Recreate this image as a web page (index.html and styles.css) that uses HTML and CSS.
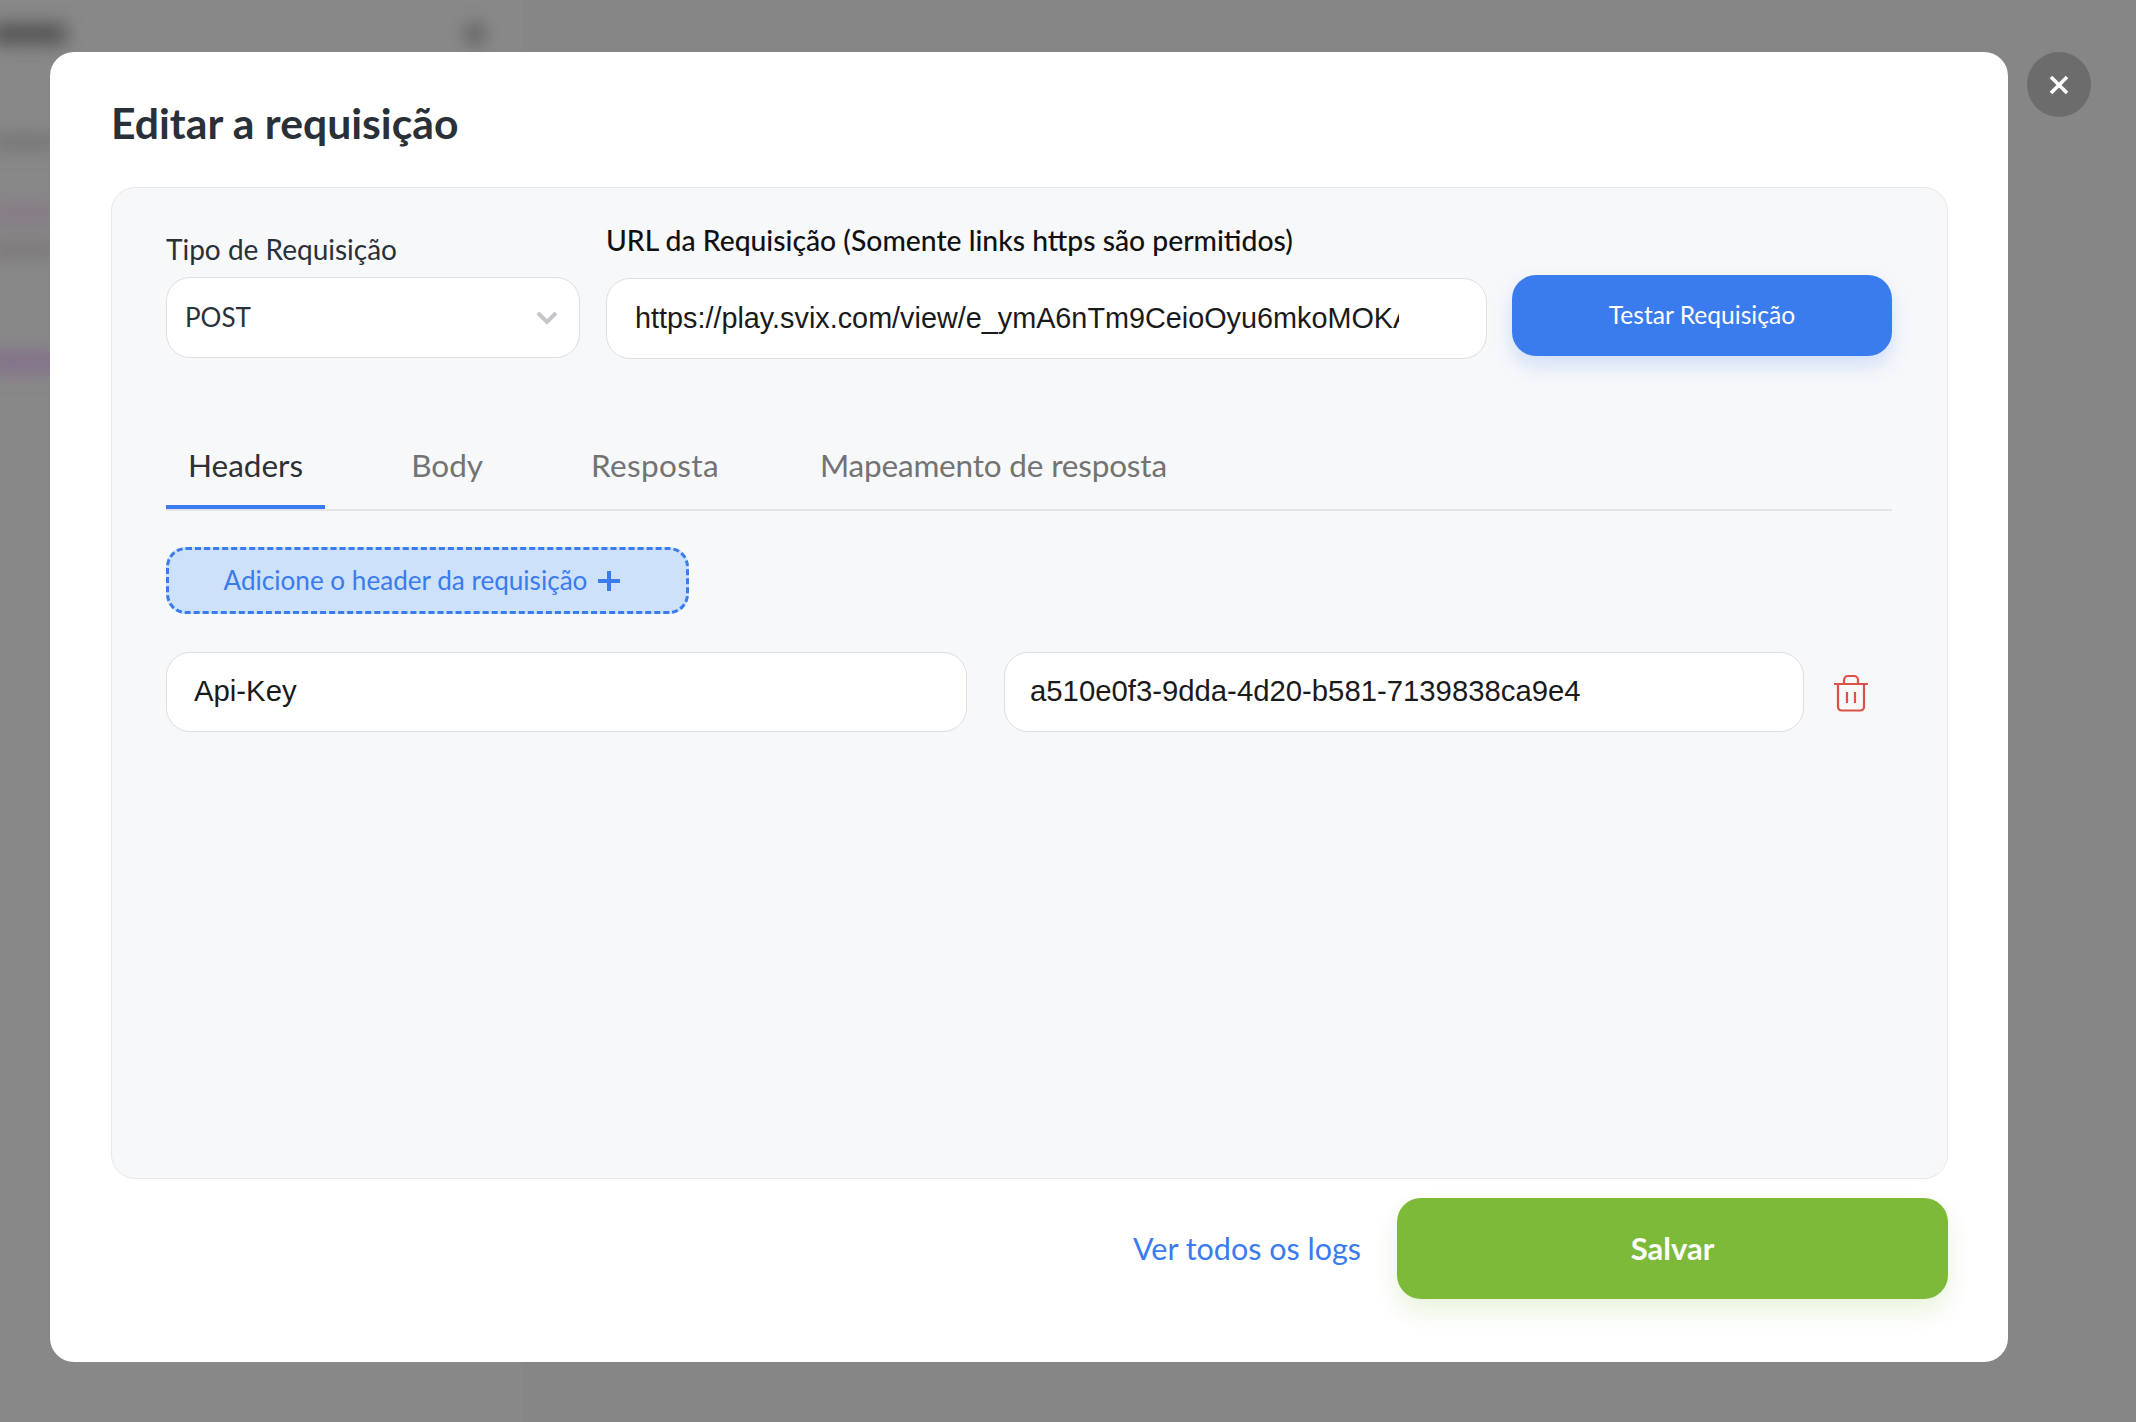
FILE: index.html
```html
<!DOCTYPE html>
<html lang="pt-BR">
<head>
<meta charset="utf-8">
<title>Editar a requisição</title>
<link rel="stylesheet" href="styles.css">
</head>
<body>
<div class="backdrop" aria-hidden="true">
  <div class="sidebar"></div>
  <span class="blot blot-title"></span>
  <span class="blot blot-icon"></span>
  <span class="blot blot-a"></span>
  <span class="blot blot-b"></span>
  <span class="blot blot-c"></span>
  <span class="blot blot-d"></span>
</div>

<section class="modal">
  <h1 class="modal-title">Editar a requisição</h1>
  <div class="panel">
    <div class="top-row">
      <div class="field field-type">
        <label class="label">Tipo de Requisição</label>
        <div class="select">
          <span class="select-value">POST</span>
          <svg class="chevron" width="24" height="16" viewBox="0 0 24 16" fill="none"><path d="M3 3l9 9 9-9" stroke="#c4c6c9" stroke-width="4"/></svg>
        </div>
      </div>
      <div class="field field-url">
        <label class="label label-url">URL da Requisição (Somente links https são permitidos)</label>
        <input class="input input-url" readonly value="https://play.svix.com/view/e_ymA6nTm9CeioOyu6mkoMOKA6xQ2">
      </div>
      <button class="btn-test">Testar Requisição</button>
    </div>

    <nav class="tabs">
      <a class="tab tab-active">Headers</a>
      <a class="tab">Body</a>
      <a class="tab tab-resposta">Resposta</a>
      <a class="tab tab-map">Mapeamento de resposta</a>
    </nav>

    <button class="btn-add">
      <span>Adicione o header da requisição</span>
      <svg width="24" height="24" viewBox="0 0 24 24" fill="none"><path d="M12 2v20M1 12h22" stroke="#3a7bee" stroke-width="4"/></svg>
    </button>

    <div class="header-row">
      <input class="input input-header input-key" readonly value="Api-Key">
      <input class="input input-header input-value" readonly value="a510e0f3-9dda-4d20-b581-7139838ca9e4">
      <svg class="trash" width="36" height="38" viewBox="0 0 36 38" fill="none" stroke="#dd5246" stroke-width="2.2">
        <path d="M1 10h34"/>
        <path d="M5 10v23a3.500 3.500 0 0 0 3.500 3.500h19a3.500 3.500 0 0 0 3.500-3.500V10"/>
        <path d="M11 10V6a4 4 0 0 1 4-4h6a4 4 0 0 1 4 4v4"/>
        <path d="M14 18v11M22 18v11"/>
      </svg>
    </div>
  </div>

  <footer class="modal-footer">
    <a class="logs-link">Ver todos os logs</a>
    <button class="btn-save">Salvar</button>
  </footer>
</section>

<button class="close" aria-label="Fechar">
  <svg width="22" height="22" viewBox="0 0 22 22" fill="none"><path d="M3 3l16 16M19 3L3 19" stroke="#fff" stroke-width="3.600"/></svg>
</button>
</body>
</html>
```

FILE: styles.css
```css
* { box-sizing: border-box; }

html, body {
  margin: 0;
  width: 2136px;
  height: 1422px;
  overflow: hidden;
}

body {
  position: relative;
  background: #858685;
  font-family: "Lato", "Noto Sans", sans-serif;
  color: #2a3037;
}

.backdrop {
  position: absolute;
  inset: 0;
  overflow: hidden;
}

.sidebar {
  position: absolute;
  left: 0;
  top: 0;
  width: 522px;
  height: 100%;
  background: #888888;
}

.blot {
  position: absolute;
  filter: blur(9px);
}

.blot-title { left: -10px; top: 24px; width: 78px; height: 20px; background: #505150; border-radius: 10px; }
.blot-icon { left: 466px; top: 24px; width: 18px; height: 20px; background: #555756; border-radius: 9px; }
.blot-a { left: -10px; top: 134px; width: 70px; height: 16px; background: #747674; }
.blot-b { left: -10px; top: 204px; width: 70px; height: 20px; background: #867a86; }
.blot-c { left: -10px; top: 243px; width: 70px; height: 14px; background: #7a7578; }
.blot-d { left: -10px; top: 350px; width: 70px; height: 24px; background: #84728a; }

.modal {
  position: absolute;
  left: 50px;
  top: 52px;
  width: 1958px;
  height: 1310px;
  padding: 0 60px 0 61px;
  background: #fff;
  border-radius: 24px;
}

.modal-title {
  margin: 0;
  height: 135px;
  padding-top: 47px;
  font-size: 42.7px;
  line-height: 48px;
  font-weight: 700;
}

.panel {
  height: 992px;
  padding: 0 55px 0 54px;
  background: #f7f8fa;
  border: 1px solid #e6e8ec;
  border-radius: 24px;
}

.top-row {
  display: flex;
  gap: 26px;
  align-items: flex-start;
  height: 257px;
}

.field { display: flex; flex-direction: column; }
.field-type { width: 414px; padding-top: 43px; }
.field-url { width: 881px; padding-top: 34px; }

.label {
  height: 46px;
  font-size: 28px;
  line-height: 36px;
}

.label-url { height: 56px; font-size: 28.3px; color: #111; font-weight: 500; }

.select {
  display: flex;
  align-items: center;
  justify-content: space-between;
  height: 81px;
  padding: 0 20px 0 18px;
  background: #fff;
  border: 1px solid #dcdfe4;
  border-radius: 24px;
  font-size: 26px;
}

.select-value { margin-bottom: 2px; }

.input {
  height: 80px;
  padding: 0 26px;
  background: #fff;
  border: 1px solid #dcdfe4;
  border-radius: 24px;
  font-family: "Liberation Sans", Arial, sans-serif;
  font-size: 29.3px;
  color: #1a1a1a;
  outline: none;
}

.input-url {
  width: 100%;
  height: 81px;
  padding: 0 87px 0 28px;
  font-size: 28.8px;
}

.btn-test {
  width: 380px;
  height: 81px;
  margin: 87px 0 0 -1px;
  padding-bottom: 4px;
  border: 0;
  border-radius: 24px;
  background: #3a7bee;
  color: #fff;
  font: 400 24.6px "Lato", sans-serif;
  box-shadow: 0 10px 20px rgba(58, 123, 238, .2);
}

.tabs {
  display: flex;
  gap: 64px;
  height: 64px;
  border-bottom: 2px solid #e3e5e8;
  font-size: 31.5px;
  line-height: 40px;
  color: #737373;
  box-sizing: content-box;
}

.tab { padding: 0 22px; height: 64px; }
.tab-resposta { letter-spacing: .35px; }
.tab-map { margin-left: -7px; letter-spacing: -.18px; }
.tab-active { color: #2e3135; border-bottom: 4px solid #3a7bee; }

.btn-add {
  display: flex;
  align-items: center;
  justify-content: center;
  gap: 10px;
  width: 523px;
  height: 67px;
  margin-top: 36px;
  padding-right: 16px;
  background: #cde1fa;
  border: 3px dashed #3a7bee;
  border-radius: 20px;
  color: #3a7bee;
  font: 400 26.100px "Lato", sans-serif;
}

.btn-add span { margin-bottom: 2px; }

.header-row {
  display: flex;
  align-items: center;
  gap: 37px;
  margin-top: 38px;
}

.input-header { padding-bottom: 2px; }
.input-key { width: 801px; padding-left: 27px; }
.input-value { width: 800px; padding-left: 25px; }

.trash { margin: 2px 0 0 -8px; }

.modal-footer {
  display: flex;
  align-items: center;
  justify-content: flex-end;
  gap: 36px;
  margin-top: 19px;
}

.logs-link {
  margin-bottom: 2px;
  color: #3a7bee;
  font-size: 30.5px;
}

.btn-save {
  width: 551px;
  height: 101px;
  padding-bottom: 2px;
  border: 0;
  border-radius: 24px;
  background: #7eba39;
  color: #fff;
  font: 700 31px "Lato", sans-serif;
  box-shadow: 0 12px 24px rgba(126, 186, 57, .18);
}

.close {
  position: absolute;
  left: 2027px;
  top: 52px;
  display: flex;
  align-items: center;
  justify-content: center;
  width: 64px;
  height: 65px;
  padding: 0;
  border: 0;
  border-radius: 50%;
  background: #6c6c6c;
}
```
